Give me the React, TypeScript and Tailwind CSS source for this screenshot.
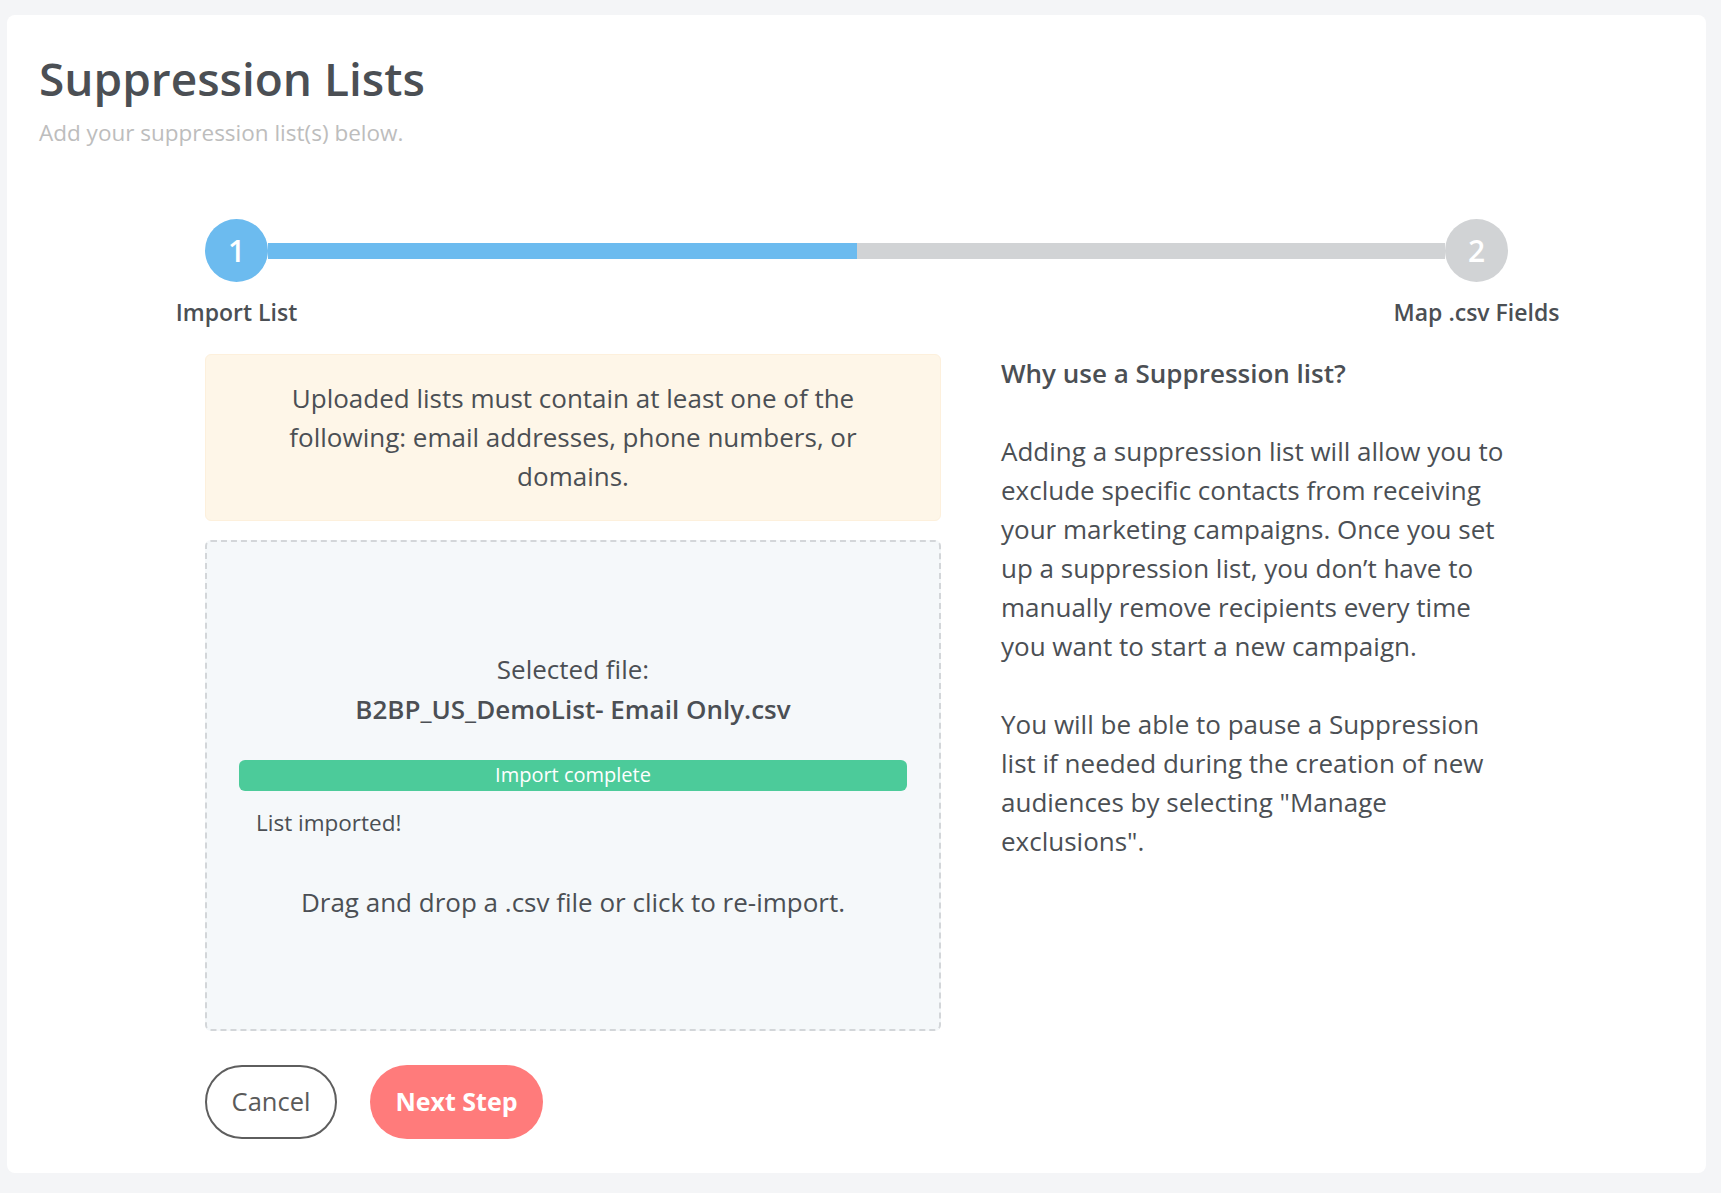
import React from "react";

const font = { fontFamily: '"Open Sans", "Noto Sans", sans-serif' };

const StepCircle = ({ n, active }: { n: number; active: boolean }) => (
  <div
    className={`flex h-[63px] w-[63px] shrink-0 items-center justify-center rounded-full text-[30px] font-semibold text-white ${
      active ? "bg-[#6cbbef]" : "bg-[#d1d3d5]"
    }`}
  >
    {n}
  </div>
);

const StepLabel = ({ text }: { text: string }) => (
  <div className="flex w-[63px] justify-center">
    <span className="whitespace-nowrap text-[23px] font-semibold text-[#4b4f54]">
      {text}
    </span>
  </div>
);

export default function App() {
  return (
    <div
      className="min-h-[1193px] bg-[#f4f5f7] pl-[7px] pr-[15px] pt-[15px] pb-[22px]"
      style={font}
    >
      <div className="rounded-lg bg-white px-[32px] pt-[35px] pb-[34px]">
        {/* Header */}
        <h1 className="text-[46px] font-semibold leading-[56px] text-[#4b4f54]">
          Suppression Lists
        </h1>
        <p className="mt-[12px] text-[22.5px] leading-[30px] text-[#bdbdbd]">
          Add your suppression list(s) below.
        </p>

        <div className="mx-auto mt-[71px] w-[1303px]">
          {/* Stepper */}
          <div className="flex items-center">
            <StepCircle n={1} active />
            <div className="flex h-[16px] flex-1">
              <div className="flex-1 bg-[#6cbbef]" />
              <div className="flex-1 bg-[#d1d3d5]" />
            </div>
            <StepCircle n={2} active={false} />
          </div>
          <div className="mt-[13px] flex justify-between">
            <StepLabel text="Import List" />
            <StepLabel text="Map .csv Fields" />
          </div>

          {/* Content */}
          <div className="mt-[24px] flex gap-[60px]">
            <div className="w-[736px]">
              <div className="rounded-md border border-[#fdf0dc] bg-[#fef6e8] px-[60px] py-[24px] text-center text-[26px] leading-[39px] text-[#4b4f54]">
                Uploaded lists must contain at least one of the following: email
                addresses, phone numbers, or domains.
              </div>

              <div className="mt-[19px] flex h-[491px] flex-col justify-center rounded-md border-2 border-dashed border-[#d3d6d9] bg-[#f5f8fa] px-[32px] text-[#4b4f54]">
                <p className="text-center text-[26px] leading-[40px]">
                  Selected file:
                </p>
                <p className="text-center text-[26px] font-semibold leading-[40px]">
                  B2BP_US_DemoList- Email Only.csv
                </p>
                <div className="mt-[31px] flex h-[31px] items-center justify-center rounded-md bg-[#4ccb9a] text-[20px] text-white">
                  Import complete
                </div>
                <p className="mt-[16px] pl-[17px] text-[22.5px] leading-[32px]">
                  List imported!
                </p>
                <p className="mt-[44px] text-center text-[26px] leading-[39px]">
                  Drag and drop a .csv file or click to re-import.
                </p>
              </div>

              <div className="mt-[34px] flex gap-[33px]">
                <button className="h-[74px] w-[132px] rounded-full border-2 border-[#5e5e5e] bg-white text-[25.5px] text-[#5a5a5a]">
                  Cancel
                </button>
                <button className="h-[74px] w-[173px] rounded-full bg-[#ff7b7b] text-[25px] font-bold text-white">
                  Next Step
                </button>
              </div>
            </div>

            <div className="w-[503px] text-[26px] leading-[39px] text-[#4b4f54]">
              <p className="font-semibold">Why use a Suppression list?</p>
              <p className="mt-[39px]">
                Adding a suppression list will allow you to exclude specific
                contacts from receiving your marketing campaigns. Once you set up
                a suppression list, you don’t have to manually remove recipients
                every time you want to start a new campaign.
              </p>
              <p className="mt-[39px]">
                You will be able to pause a Suppression list if needed during the
                creation of new audiences by selecting "Manage exclusions".
              </p>
            </div>
          </div>
        </div>
      </div>
    </div>
  );
}
